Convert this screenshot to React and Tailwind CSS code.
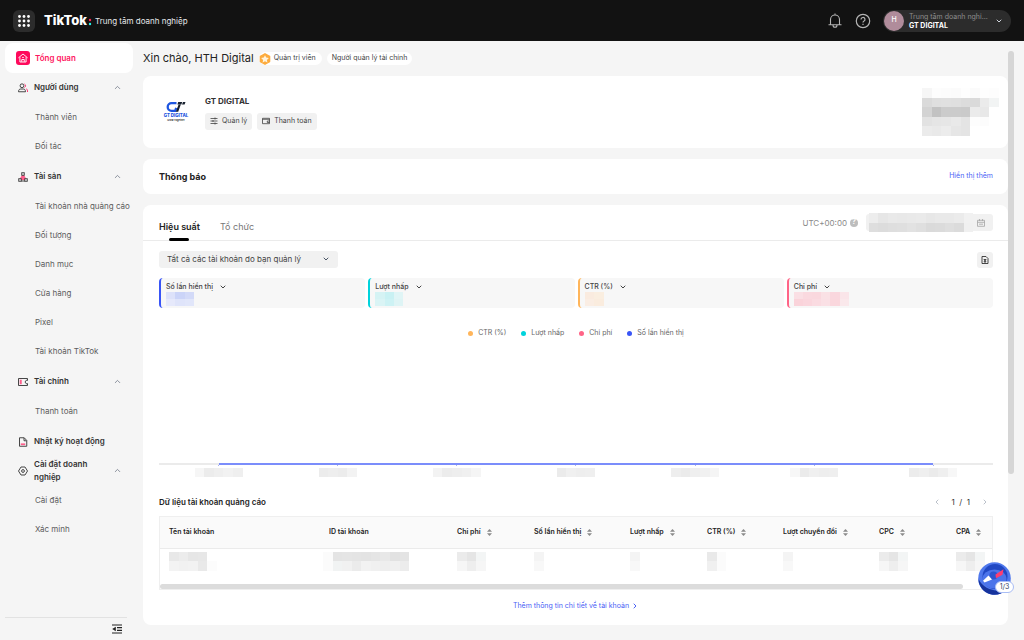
import React, { useState } from 'react';
import { ChevronUp, ChevronDown, ChevronLeft, ChevronRight } from 'lucide-react';

const NAV = [
  {
    label: 'Người dùng', icon: 'users',
    items: ['Thành viên', 'Đối tác']
  },
  {
    label: 'Tài sản', icon: 'assets',
    items: ['Tài khoản nhà quảng cáo', 'Đối tượng', 'Danh mục', 'Cửa hàng', 'Pixel', 'Tài khoản TikTok']
  },
  {
    label: 'Tài chính', icon: 'finance',
    items: ['Thanh toán']
  },
  { label: 'Nhật ký hoạt động', icon: 'log' },
  {
    label: 'Cài đặt doanh nghiệp', icon: 'settings',
    items: ['Cài đặt', 'Xác minh']
  }
];

const METRICS = [
  {
    label: 'Số lần hiển thị', border: 'border-[#3955f6]', mask: 'w-7 h-[14px]',
    rows: [['#dde2fa', '#cbd4f8', '#d3daf8'], ['#e6e9fb', '#dfe4fa', '#e1e6fa']]
  },
  {
    label: 'Lượt nhấp', border: 'border-[#00d3dc]', mask: 'w-7 h-[14px]',
    rows: [['#d5f3f4', '#c9f1f3', '#e0f5f6'], ['#daf4f5', '#cdf2f4', '#def4f5']]
  },
  {
    label: 'CTR (%)', border: 'border-[#ffb55a]', mask: 'w-[19px] h-[14px]',
    rows: [['#faebdf', '#faeee0'], ['#faede3', '#faecde']]
  },
  {
    label: 'Chi phí', border: 'border-[#ff6487]', mask: 'w-[55px] h-[14px]',
    rows: [
      ['#fadfe4', '#fad9df', '#fad8de', '#fae1e5', '#fad7de', '#fae5e9'],
      ['#fad3da', '#fad6dd', '#fadbe1', '#fae0e5', '#fad7dd', '#fae8eb']
    ]
  }
];

const LEGEND = [
  { label: 'CTR (%)', dot: 'bg-[#ffb55a]' },
  { label: 'Lượt nhấp', dot: 'bg-[#00d3dc]' },
  { label: 'Chi phí', dot: 'bg-[#ff6487]' },
  { label: 'Số lần hiển thị', dot: 'bg-[#3955f6]' }
];

const AXIS = [
  ['#f6f6f6', '#ececec', '#efefef', '#f2f2f2', '#efefef'],
  ['#ececec', '#eeeeee', '#ececec', '#f3f3f3'],
  ['#f3f3f3', '#ececec', '#eeeeee', '#f0f0f0', '#f5f5f5'],
  ['#ebebeb', '#f0f0f0', '#eeeeee', '#efefef'],
  ['#eeeeee', '#ebebeb', '#efefef', '#f1f1f1', '#f5f5f5'],
  ['#f7f7f7', '#ebebeb', '#f0f0f0', '#eeeeee', '#efefef'],
  ['#ececec', '#efefef', '#ebebeb', '#efefef', '#f7f7f7']
];

const LOGO_MASK = [
  ['#f6f6f6', '#fdfdfd', '#fcfcfc', '#fbfbfb', '#fefefe', '#fbfbfb', '#fefefe', '#fdfdfd'],
  ['#dadada', '#dfdfdf', '#e0e0e0', '#dfdfdf', '#dcdcdc', '#dadada', '#ebebeb', '#f2f4f4'],
  ['#d3d3d3', '#c2c2c2', '#cbcbcb', '#cbcbcb', '#cacaca', '#ebebeb', '#e8e8e8', '#ffffff'],
  ['#e2e2e2', '#e5e5e5', '#e6e6e6', '#e9e9e9', '#e4e4e4', '#fdfdfd', '#fcfcfc', '#ffffff'],
  ['#ebebeb', '#e9e9e9', '#ececec', '#e6e6e6', '#e4e4e4', '#ffffff', '#ffffff', '#ffffff']
];

const DATE_MASK = [
  ['#ededed', '#e6e6e6', '#e9e9e9', '#e8e8e8', '#e9e9e9', '#eaeaea', '#e7e7e7', '#e9e9e9', '#e9e9e9', '#ebebeb', '#f1f1f1'],
  ['#dedede', '#dcdcdc', '#dedede', '#dfdfdf', '#e2e2e2', '#dfdfdf', '#dadada', '#dbdbdb', '#dedede', '#dbdbdb', '#f0f0f0']
];

const MONEY = [['#ebebeb', '#e5e5e5', '#f3f5f5'], ['#f6f6f6', '#eeeeee', '#f6f6f6']];
const SINGLE = [['#f4f4f4'], ['#f8f8f8']];

const COLUMNS = [
  {
    label: 'Tên tài khoản', width: '', mask: 'w-12',
    rows: [['#e8e8e8', '#ececec', '#e6e6e6', '#e7e7e7', '#ffffff'], ['#f3f3f3', '#f1f1f1', '#f2f2f2', '#e9e9e9', '#fcfcfc']]
  },
  {
    label: 'ID tài khoản', width: 'w-32', mask: 'w-[86px] -ml-1.5',
    rows: [
      ['#fbfbfb', '#e4e4e4', '#e5e5e5', '#e4e4e4', '#e3e3e3', '#e5e5e5', '#e8e8e8', '#e2e2e2', '#e4e4e4'],
      ['#fbfbfb', '#f1f3f3', '#f1f1f1', '#ebebeb', '#f2f2f2', '#f0f0f0', '#eeeeee', '#f0f0f0', '#ececec']
    ]
  },
  { label: 'Chi phí', width: 'w-[77px]', mask: 'w-[29px]', rows: MONEY, sort: true },
  { label: 'Số lần hiển thị', width: 'w-24', mask: 'w-[10px]', rows: SINGLE, sort: true },
  { label: 'Lượt nhấp', width: 'w-[77px]', mask: 'w-[10px]', rows: SINGLE, sort: true },
  {
    label: 'CTR (%)', width: 'w-[76px]', mask: 'w-[19px]', sort: true,
    rows: [['#e9e9e9', '#fbfbfb'], ['#f0f0f0', '#fbfbfb']]
  },
  { label: 'Lượt chuyển đổi', width: 'w-24', mask: 'w-[10px]', rows: SINGLE, sort: true },
  { label: 'CPC', width: 'w-[77px]', mask: 'w-[29px]', rows: MONEY, sort: true },
  { label: 'CPA', width: 'w-[45px]', mask: 'w-[29px]', rows: MONEY, sort: true }
];

// Pixelated block that hides private values
function Mosaic({ rows, className }) {
  return (
    <div className={`flex flex-col ${className}`} aria-hidden="true">
      {rows.map((row, i) => (
        <div key={i} className="flex flex-1">
          {row.map((color, j) => (
            <span key={j} className="flex-1" style={{ backgroundColor: color }} />
          ))}
        </div>
      ))}
    </div>
  );
}

function NavIcon({ name }) {
  return (
    <svg viewBox="0 0 20 20" className="w-[10px] h-[10px] shrink-0" fill="none" stroke="#333" strokeWidth="1.8">
      {name === 'users' && (
        <>
          <circle cx="8" cy="5.500" r="3.800" />
          <path d="M1 17.500c0-4 2-5.500 4.500-5.500h5c2.500 0 4.500 1.500 4.500 5.500z" />
          <path d="M13 2a4 4 0 0 1 0 7M16.500 11.500c2 1 2.700 3 2.700 6.500" stroke="#fe2c6c" strokeWidth="2" />
        </>
      )}
      {name === 'assets' && (
        <>
          <path d="M10 5 3.500 15h13z" fill="#fe5f8c" stroke="#fe4a7d" />
          <rect x="7.500" y="1.500" width="5" height="5" fill="#f5f5f5" />
          <rect x="1.500" y="13.500" width="5" height="5" fill="#f5f5f5" />
          <rect x="13.500" y="13.500" width="5" height="5" fill="#f5f5f5" />
          <path d="M6.500 18h7" />
        </>
      )}
      {name === 'finance' && (
        <>
          <path d="M19 7V3H1v14h18v-4" />
          <path d="M19 6.500h-2.500L14 10l2.500 3.500H19" />
          <path d="M5.500 5.500v9" stroke="#fe5f8c" strokeWidth="4" />
        </>
      )}
      {name === 'log' && (
        <>
          <path d="M3 1.500h9.500L17.500 7v11.500H3z" />
          <path d="M12 2v5.500h5" />
          <path d="M5.500 14.500h9" stroke="#fe5f8c" strokeWidth="3.500" />
        </>
      )}
      {name === 'settings' && (
        <>
          <path d="M6 2h8l5 8-5 8H6l-5-8z" strokeLinejoin="round" />
          <circle cx="10" cy="10" r="2.800" />
        </>
      )}
    </svg>
  );
}

function SortIcon() {
  return (
    <svg viewBox="0 0 10 14" className="w-[5px] h-[7px] shrink-0" fill="#8a8a8a">
      <path d="M5 0 10 5.500H0z" />
      <path d="M5 14 0 8.500h10z" />
    </svg>
  );
}

function Header() {
  return (
    <header className="flex items-center h-[41px] shrink-0 bg-[#121212] px-[13px]">
      <button aria-label="Menu" className="flex items-center justify-center size-[22px] rounded-md bg-[#2c2c2c]">
        <svg viewBox="0 0 12 12" className="size-3" fill="#fff">
          {[1.5, 6, 10.5].map(y => [1.5, 6, 10.5].map(x => <circle key={`${x}-${y}`} cx={x} cy={y} r="1.4" />))}
        </svg>
      </button>
      <a href="#home" className="flex items-center ml-[9px] text-white">
        <span className="text-[13px] font-extrabold">TikTok</span>
        <svg viewBox="0 0 4 8" className="w-1 h-2 mt-0.5 ml-px" aria-hidden="true">
          <circle cx="2" cy="2" r="1.200" fill="#fe2c55" />
          <circle cx="2" cy="6" r="1.200" fill="#25f4ee" />
        </svg>
        <span className="ml-[3px] text-[8px] text-gray-200">Trung tâm doanh nghiệp</span>
      </a>
      <div className="flex items-center ml-auto">
        <button aria-label="Thông báo">
          <svg viewBox="0 0 14 16" className="w-[14px] h-4" fill="none" stroke="#b5b5b5" strokeWidth="1.100">
            <path d="M2.500 11.500V6.500a4.500 4.500 0 0 1 9 0v5M.5 11.800h13M5 12.200a2 2 0 0 0 4 0M7 2V.5" />
          </svg>
        </button>
        <button aria-label="Trợ giúp" className="ml-[13px]">
          <svg viewBox="0 0 16 16" className="size-4" fill="none" stroke="#b5b5b5" strokeWidth="1.200">
            <circle cx="8" cy="8" r="6.700" />
            <path d="M6 6.500a2 2 0 1 1 2.800 1.800c-.6.300-.8.600-.8 1.300M8 10.800v1.200" />
          </svg>
        </button>
        <button className="flex items-center ml-3 h-[22px] w-[128px] rounded-full bg-[#2c2c2c] pl-px pr-2 text-left">
          <span className="flex items-center justify-center size-5 rounded-full bg-[#b08c9b] text-[7px] font-medium text-white">H</span>
          <span className="flex flex-col ml-[5px] text-[7px] leading-[9px]">
            <span className="text-[#8c8c8c]">Trung tâm doanh nghi...</span>
            <span className="font-bold text-white">GT DIGITAL</span>
          </span>
          <ChevronDown size={8} strokeWidth={3} className="ml-auto text-gray-300" />
        </button>
      </div>
    </header>
  );
}

function Sidebar() {
  const [closed, setClosed] = useState({});

  return (
    <aside className="flex flex-col w-[143px] shrink-0 pt-0.5 pl-[5px]">
      <nav className="text-[8px]">
        <a href="#overview" className="flex items-center h-[30px] w-32 rounded-lg bg-white pl-[11px] font-semibold text-[#fe1660]">
          <span className="flex items-center justify-center size-[14px] rounded-[3px] bg-[#fe0a5c]">
            <svg viewBox="0 0 12 12" className="size-[10px]" fill="none" stroke="#fff" strokeWidth="1.100">
              <path d="M.5 5.800 6 1.200l5.500 4.600M2.300 5v5.800h7.400V5M4.500 10.500V7.800h3v2.700M5 5.300h2" />
            </svg>
          </span>
          <span className="ml-[5px]">Tổng quan</span>
        </a>
        {NAV.map(group => (
          <div key={group.label} className={group.items ? 'pb-0.5' : ''}>
            <button
              onClick={() => setClosed({ ...closed, [group.label]: !closed[group.label] })}
              className="flex items-center h-[29px] w-32 pl-[13px] pr-[11px] text-left font-semibold leading-[13px] text-[#333]">
              <NavIcon name={group.icon} />
              <span className={`ml-1.5 ${group.items ? 'w-[72px]' : 'whitespace-nowrap'}`}>{group.label}</span>
              {group.items && <ChevronUp size={9} strokeWidth={2} className="ml-auto shrink-0 text-gray-500" />}
            </button>
            {group.items && !closed[group.label] && group.items.map(item => (
              <a key={item} href="#nav" className="flex items-center h-[29px] pl-[30px] whitespace-nowrap text-[#5c5c5c]">{item}</a>
            ))}
          </div>
        ))}
      </nav>
      <div className="flex justify-end w-[122px] h-[23px] items-center mt-auto border-t border-[#e2e2e2] pr-[5px]">
        <button aria-label="Thu gọn">
          <svg viewBox="0 0 10 10" className="size-[10px]" stroke="#222" strokeWidth="1.200">
            <path d="M0 1h10M5 3.700h5M5 6.300h5M0 9h10" />
            <path d="M3.800 2.800v4.400L.2 5z" fill="#222" stroke="none" />
          </svg>
        </button>
      </div>
    </aside>
  );
}

function CompanyCard() {
  return (
    <section className="flex items-center h-[72px] rounded-lg bg-white pl-5 pr-[9px]">
      <svg viewBox="0 0 26 22" className="w-[26px] h-[22px]" aria-label="GT Digital">
        <path d="M13.500 2.200H8.500a3.800 3.800 0 0 0 0 7.600h3.700l1-3" fill="none" stroke="#1d55e0" strokeWidth="2.300" />
        <path d="M15.500 3.800h2.200l-2.500 7h-2.400zM15.200 1.100h4l-.8 2.300h-4zM20 1.100h2.500l-.9 2.500H19z" fill="#17202e" />
        <text x="13" y="16" textAnchor="middle" fontSize="4.400" fontWeight="800" fill="#1d55e0">GT DIGITAL</text>
        <text x="13" y="19.500" textAnchor="middle" fontSize="2.400" fontWeight="700" fill="#333">Grow Together</text>
      </svg>
      <div className="ml-4">
        <h2 className="text-[8px] leading-3 font-bold text-[#333]">GT DIGITAL</h2>
        <div className="flex gap-[5px] mt-1.5 text-[7px] text-[#444]">
          <button className="flex items-center gap-1 h-[17px] rounded-[3px] bg-[#f1f1f1] px-[5px]">
            <svg viewBox="0 0 8 8" className="size-2" stroke="#444" strokeWidth=".8">
              <path d="M.5 1.500h7M.5 4h7M.5 6.500h7M5 .5v2M3 3v2M5 5.500v2" />
            </svg>
            Quản lý
          </button>
          <button className="flex items-center gap-1 h-[17px] rounded-[3px] bg-[#f1f1f1] px-[5px]">
            <svg viewBox="0 0 8 8" className="size-2" fill="none" stroke="#444" strokeWidth=".8">
              <path d="M.5 1.300h7v5.400h-7zM.5 2.300h7M7.500 4H5.300v1.500h2.200" />
            </svg>
            Thanh toán
          </button>
        </div>
      </div>
      <Mosaic rows={LOGO_MASK} className="ml-auto w-[77px] h-12" />
    </section>
  );
}

function Performance() {
  return (
    <>
      <div className="flex items-end justify-between h-9 border-b border-[#ebebeb] pl-4 pr-[15px]">
        <div className="flex gap-5 text-[9px]">
          <button className="flex flex-col items-center font-semibold text-[#222]">
            <span className="leading-3">Hiệu suất</span>
            <span className="w-5 h-[3px] mt-[5px] -mb-px rounded-sm bg-black" />
          </button>
          <button className="self-start leading-3 text-[#777]">Tổ chức</button>
        </div>
        <div className="flex items-center mb-[9px]">
          <span className="text-[8px] text-[#8a8a8a]">UTC+00:00</span>
          <span className="flex items-center justify-center size-2 ml-[3px] rounded-full bg-[#bdbdbd] text-[7px] font-bold text-white">?</span>
          <button aria-label="Khoảng thời gian" className="flex items-center justify-between h-[17px] w-[127px] ml-2 rounded-[3px] bg-[#f1f1f1] pl-[3px] pr-2">
            <Mosaic rows={DATE_MASK} className="w-[104px] h-[19px]" />
            <svg viewBox="0 0 8 8" className="size-2" fill="none" stroke="#a5a5a5" strokeWidth=".8">
              <path d="M.5 1.300h7v6h-7zM.5 3.300h7M2.500 0v2M5.500 0v2M2 5.200h4" />
            </svg>
          </button>
        </div>
      </div>

      <div className="pl-4 pr-[15px] pt-2.5">
        <div className="flex items-center justify-between">
          <div className="relative flex">
            <select aria-label="Tài khoản" className="appearance-none h-[17px] w-[179px] rounded-[3px] bg-[#f1f1f1] pl-2 text-[8px] leading-[17px] text-[#444]">
              <option>Tất cả các tài khoản do bạn quản lý</option>
            </select>
            <ChevronDown size={8} strokeWidth={3} className="absolute right-2 top-1 text-gray-600 pointer-events-none" />
          </div>
          <button aria-label="Xuất" className="flex items-center justify-center size-4 rounded-[3px] bg-[#f1f1f1]">
            <svg viewBox="0 0 8 8" className="size-2" fill="none" stroke="#333" strokeWidth=".9">
              <path d="M1 .5h4L7 2.500v5H1zM2.800 3.500l2.400 2.500M5.200 3.500 2.800 6M3 3.500h2M3 6h2" />
            </svg>
          </button>
        </div>

        <div className="grid grid-cols-4 gap-[3px] mt-2.5">
          {METRICS.map(m => (
            <div key={m.label} className={`h-[30px] rounded-sm border-l-2 bg-[#f7f7f7] pl-[5px] pt-1 ${m.border}`}>
              <button className="flex items-center gap-1.5 text-[7px] leading-[10px] font-medium text-[#444]">
                {m.label}
                <ChevronDown size={8} strokeWidth={3} />
              </button>
              <Mosaic rows={m.rows} className={m.mask} />
            </div>
          ))}
        </div>

        <div className="flex justify-center gap-[15px] mt-5 text-[7px] leading-[10px] text-[#666]">
          {LEGEND.map(l => (
            <span key={l.label} className="flex items-center gap-[5px]">
              <span className={`size-[5px] rounded-full ${l.dot}`} />
              {l.label}
            </span>
          ))}
        </div>

        <div className="mt-[125px] h-0.5 bg-[#ebebeb]">
          <div className="w-6/7 h-0.5 mx-auto bg-[#7b8dfb]" />
        </div>
        <div className="flex">
          {AXIS.map((cells, i) => (
            <div key={i} className="flex flex-col flex-1 items-center">
              <span className="w-px h-px bg-[#aab4ee]" />
              <Mosaic rows={[cells]} className={`mt-0.5 h-[9px] ${cells.length === 4 ? 'w-[38px]' : 'w-12'}`} />
            </div>
          ))}
        </div>
      </div>
    </>
  );
}

function AccountTable() {
  return (
    <div className="pl-4 pr-[15px] pt-[19px] pb-[13px]">
      <div className="flex items-center justify-between">
        <h3 className="text-[8px] leading-3 font-semibold text-[#222]">Dữ liệu tài khoản quảng cáo</h3>
        <div className="flex items-center gap-[11px] pr-1 text-[8px] leading-3 text-[#333]">
          <button aria-label="Trang trước"><ChevronLeft size={8} className="text-gray-400" /></button>
          <span>1&nbsp; /&nbsp; 1</span>
          <button aria-label="Trang sau"><ChevronRight size={8} className="text-gray-400" /></button>
        </div>
      </div>

      <div className="mt-2 border border-[#efefef]">
        <table className="table-fixed w-full text-[7px] text-[#222]">
          <thead>
            <tr className="h-[31px] border-b border-[#ebebeb] bg-[#fafafa]">
              {COLUMNS.map(c => (
                <th key={c.label} className={`p-0 pl-[9px] text-left font-semibold whitespace-nowrap ${c.width}`}>
                  <span className="flex items-center gap-1.5">
                    {c.label}
                    {c.sort && <SortIcon />}
                  </span>
                </th>
              ))}
            </tr>
          </thead>
          <tbody>
            <tr className="h-9">
              {COLUMNS.map(c => (
                <td key={c.label} className="p-0 pt-[3px] pl-[9px] align-top">
                  <Mosaic rows={c.rows} className={`h-[19px] ${c.mask}`} />
                </td>
              ))}
            </tr>
          </tbody>
        </table>
        <div className="h-[5px] mr-[29px] rounded-full bg-[#dcdcdc]" />
      </div>

      <div className="flex justify-center mt-2.5">
        <a href="#details" className="flex items-center gap-0.5 text-[7px] leading-3 text-[#4a62f5]">
          Thêm thông tin chi tiết về tài khoản
          <ChevronRight size={8} strokeWidth={3} />
        </a>
      </div>
    </div>
  );
}

function GuideButton() {
  return (
    <button className="absolute right-2.5 bottom-[45px] w-9 h-[33px]" aria-label="Hướng dẫn 1/3">
      <svg viewBox="0 0 33 33" className="size-[33px]">
        <circle cx="16.500" cy="16.500" r="16.300" fill="#4f78ec" />
        <path d="M.5 17a16 16 0 0 0 30 7.500C24 32 6 29 .5 17z" fill="#16339c" />
        <circle cx="17" cy="14.500" r="12.500" fill="#2148c4" />
        <ellipse cx="16.500" cy="17" rx="12" ry="9.500" fill="#4b74ea" />
        <circle cx="15.500" cy="13.500" r="4" fill="#2c55d0" />
        <path d="M17.500 12.500 25.500 7.200l-1 5.500-6.500 3.500z" fill="#fe3d70" />
        <path d="M10.500 13.500 14 17.500l-7.500 3-1.500-1.700z" fill="#fff" />
      </svg>
      <span className="absolute right-0 bottom-0.5 flex items-center justify-center w-[19px] h-3 rounded-full border border-[#a9bdf5] bg-white text-[7px] text-[#333f66]">1/3</span>
    </button>
  );
}

export default function App() {
  return (
    <div className="relative flex flex-col h-screen overflow-hidden bg-[#f5f5f5] font-['Inter','Noto_Sans',sans-serif]">
      <Header />
      <div className="flex flex-1 min-h-0">
        <Sidebar />
        <main className="flex-1 min-w-0">
          <div className="flex items-center h-[35px]">
            <h1 className="text-[11px] text-[#222]">Xin chào, HTH Digital</h1>
            <span className="flex items-center h-[13px] ml-[5px] rounded-full bg-white pr-1.5 text-[7px] text-[#444]">
              <svg viewBox="0 0 12 12" className="size-3 mr-[3px]">
                <path d="M6 .8l4.600 2.600v5.200L6 11.200 1.400 8.600V3.400z" fill="#fdab3d" stroke="#fdab3d" strokeWidth="1.400" strokeLinejoin="round" />
                <path d="M6 2.200l1.200 2.400 2.700.4-2 1.900.5 2.700L6 8.300 3.600 9.600l.5-2.700-2-1.900 2.700-.4z" fill="#fff3dc" />
              </svg>
              Quản trị viên
            </span>
            <span className="flex items-center h-[13px] ml-[5px] rounded-full bg-white px-[5px] text-[7px] text-[#444]">Người quản lý tài chính</span>
          </div>

          <CompanyCard />

          <section className="flex items-center justify-between h-[35px] mt-[11px] rounded-lg bg-white pl-4 pr-[15px]">
            <h2 className="text-[9px] font-bold text-[#222]">Thông báo</h2>
            <a href="#more" className="text-[7px] text-[#4a62f5]">Hiển thị thêm</a>
          </section>

          <section className="mt-[11px] rounded-lg bg-white">
            <Performance />
            <AccountTable />
          </section>
        </main>
        <div className="w-4 shrink-0">
          <div className="w-1.5 h-[423px] mt-2.5 rounded-full bg-[#d6d6d6]" />
        </div>
      </div>
      <GuideButton />
    </div>
  );
}
